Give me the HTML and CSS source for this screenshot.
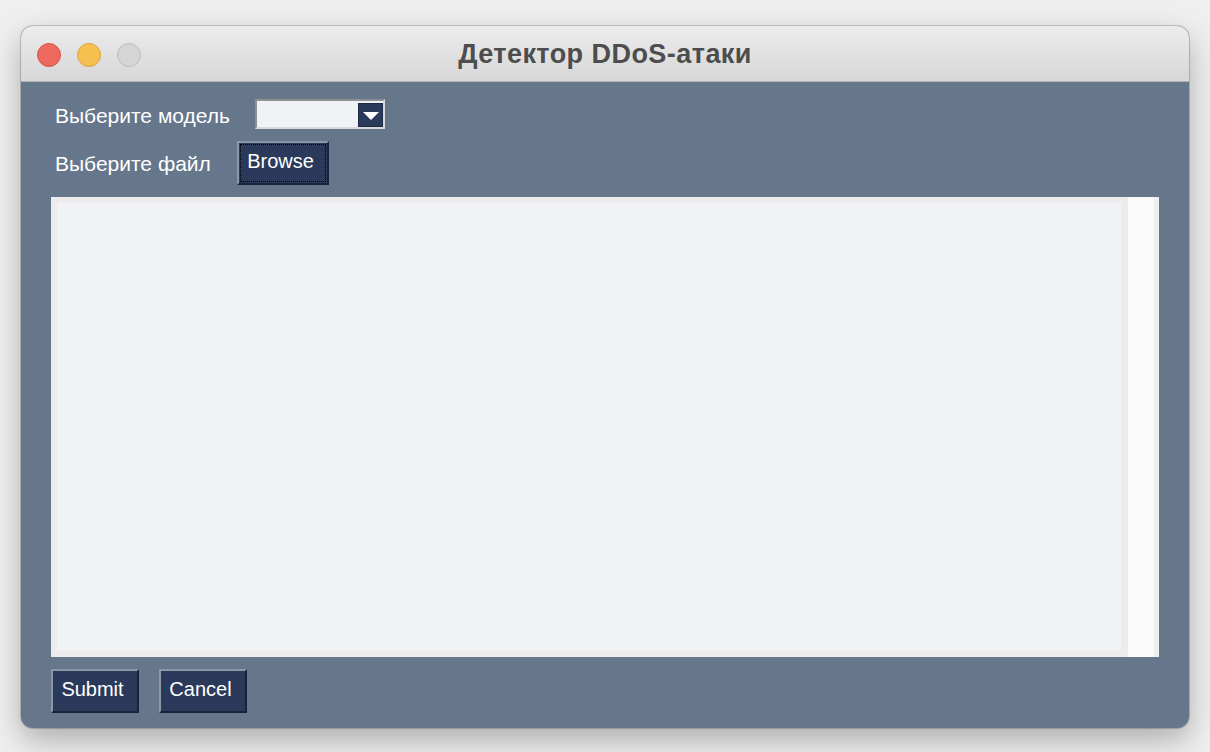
FILE: index.html
```html
<!DOCTYPE html>
<html lang="ru">
<head>
<meta charset="utf-8">
<title>Детектор DDoS-атаки</title>
<link rel="stylesheet" href="styles.css">
</head>
<body>
<div class="window">
  <div class="titlebar">
    <div class="lights">
      <span class="light red"></span>
      <span class="light yellow"></span>
      <span class="light gray"></span>
    </div>
    <div class="title">Детектор DDoS-атаки</div>
  </div>
  <div class="content">
    <div class="row row-model">
      <span class="label">Выберите модель</span>
      <div class="combo">
        <div class="combo-field"></div>
        <div class="combo-btn"><span class="arrow"></span></div>
      </div>
    </div>
    <div class="row row-file">
      <span class="label">Выберите файл</span>
      <button class="btn btn-focus">Browse</button>
    </div>
    <div class="textbox">
      <div class="text"></div>
      <div class="scroll"></div>
    </div>
    <div class="row row-actions">
      <button class="btn">Submit</button>
      <button class="btn">Cancel</button>
    </div>
  </div>
</div>
</body>
</html>
```
FILE: styles.css
```css
html, body {
  margin: 0;
  padding: 0;
}
body {
  width: 1210px;
  height: 752px;
  background: #efefef;
  font-family: "Liberation Sans", Arial, sans-serif;
  overflow: hidden;
  padding: 26px 0 0 21px;
  box-sizing: border-box;
}
.window {
  width: 1168px;
  height: 702px;
  border-radius: 12px;
  overflow: hidden;
  background: #66768b;
  box-shadow: 0 0 0 1px rgba(0,0,0,0.18), 0 12px 30px rgba(0,0,0,0.28);
  display: flex;
  flex-direction: column;
}
.titlebar {
  height: 55px;
  flex: none;
  background: linear-gradient(#ececec, #d7d7d7);
  border-bottom: 1px solid #b3b3b3;
  position: relative;
  display: flex;
  align-items: center;
  justify-content: center;
}
.lights {
  position: absolute;
  left: 16px;
  top: 17px;
  display: flex;
  gap: 16px;
}
.light {
  width: 22px;
  height: 22px;
  border-radius: 50%;
  display: block;
}
.red { background: #ee6a5e; border: 1px solid #d5544a; }
.yellow { background: #f5c04f; border: 1px solid #d9a33a; }
.gray { background: #d5d5d5; border: 1px solid #bdbdbd; }
.title {
  font-weight: bold;
  font-size: 27px;
  color: #4d4d4d;
  letter-spacing: 0.45px;
  margin-top: 1px;
  margin-left: 0;
}
.content {
  flex: 1;
  padding: 17px 30px 15px 30px;
  display: flex;
  flex-direction: column;
  gap: 12px;
}
.row {
  display: flex;
  align-items: center;
}
.row-model { height: 30px; }
.row-file { height: 44px; }
.label {
  color: #ffffff;
  font-size: 21px;
  padding-left: 4px;
}
.row-model .label { width: 200px; margin-top: 3px; }
.row-file .label { width: 182px; margin-top: 1px; }
.combo {
  width: 130px;
  height: 30px;
  box-sizing: border-box;
  border-style: solid;
  border-width: 2px;
  border-color: #8d9196 #d8dadc #d8dadc #8d9196;
  background: #f0f2f5;
  display: flex;
  align-items: flex-end;
  justify-content: space-between;
}
.combo-field { flex: 1; }
.combo-btn {
  width: 25px;
  height: 24px;
  background: #2a3a5a;
  border: 1px solid #1e2a44;
  box-sizing: border-box;
  display: flex;
  align-items: center;
  justify-content: center;
}
.arrow {
  width: 0;
  height: 0;
  border-left: 8px solid transparent;
  border-right: 8px solid transparent;
  border-top: 8px solid #ffffff;
  margin-top: 1px;
}
.btn {
  width: 88px;
  height: 44px;
  box-sizing: border-box;
  background: #2b3a5b;
  color: #ffffff;
  font-family: "Liberation Sans", Arial, sans-serif;
  font-size: 20px;
  border-style: solid;
  border-width: 2px;
  border-color: #8c97a8 #1a2339 #1a2339 #8c97a8;
  padding: 0 5px 4px 0;
  margin: 0;
}
.btn-focus {
  width: 92px;
  outline: 1.5px dotted #000000;
  outline-offset: -4px;
  padding-bottom: 3px;
}
.textbox {
  height: 460px;
  display: flex;
  background: #fafafa;
}
.text {
  flex: 1;
  border-style: solid;
  border-color: #ececec;
  border-width: 6px 7px 6px 6px;
  background: #f0f2f5;
}
.scroll {
  width: 26px;
  background: #fafafa;
  border-right: 5px solid #eeeeee;
}
.row-actions {
  height: 44px;
  gap: 20px;
}
```
